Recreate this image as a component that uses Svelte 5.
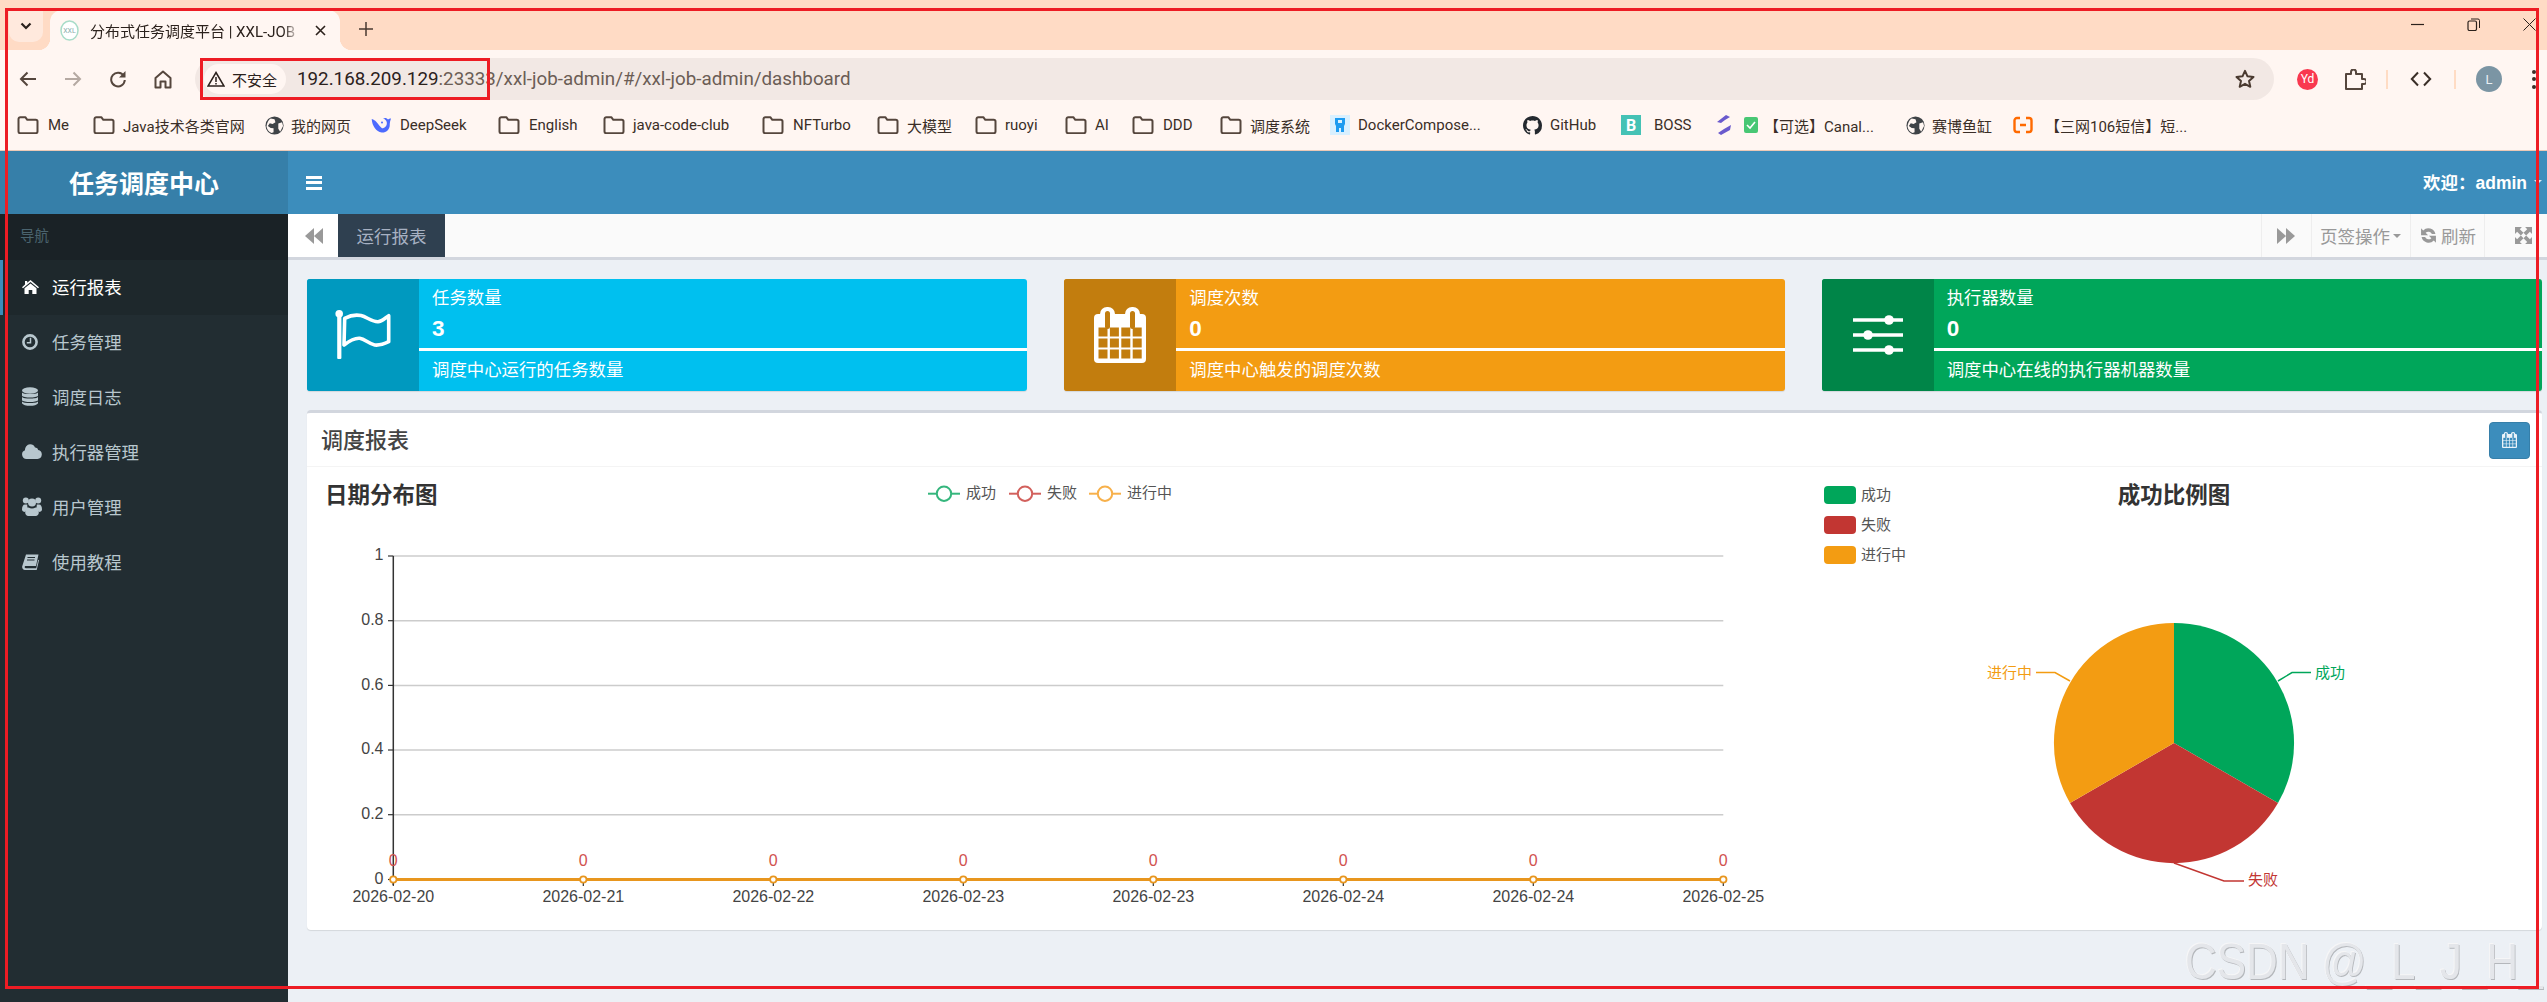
<script>
  const bookmarks = [
    { s: 17, t: 48, label: 'Me', icon: 'folder' },
    { s: 93, t: 123, label: 'Java技术各类官网', icon: 'folder' },
    { s: 265, t: 291, label: '我的网页', icon: 'globe' },
    { s: 371, t: 400, label: 'DeepSeek', icon: 'deepseek' },
    { s: 498, t: 529, label: 'English', icon: 'folder' },
    { s: 603, t: 633, label: 'java-code-club', icon: 'folder' },
    { s: 762, t: 793, label: 'NFTurbo', icon: 'folder' },
    { s: 877, t: 907, label: '大模型', icon: 'folder' },
    { s: 975, t: 1005, label: 'ruoyi', icon: 'folder' },
    { s: 1065, t: 1095, label: 'AI', icon: 'folder' },
    { s: 1132, t: 1163, label: 'DDD', icon: 'folder' },
    { s: 1220, t: 1250, label: '调度系统', icon: 'folder' },
    { s: 1330, t: 1358, label: 'DockerCompose...', icon: 'docker' },
    { s: 1523, t: 1550, label: 'GitHub', icon: 'github' },
    { s: 1621, t: 1654, label: 'BOSS', icon: 'boss' },
    { s: 1715, t: 1764, label: '【可选】Canal...', icon: 'canal' },
    { s: 1906, t: 1932, label: '赛博鱼缸', icon: 'globe' },
    { s: 2013, t: 2045, label: '【三网106短信】短...', icon: 'ali' },
    { s: 2200, t: 2200, label: '', icon: '' }
  ];
  const menu = [
    { icon: 'home', label: '运行报表', active: true },
    { icon: 'clock', label: '任务管理' },
    { icon: 'db', label: '调度日志' },
    { icon: 'cloud', label: '执行器管理' },
    { icon: 'users', label: '用户管理' },
    { icon: 'book', label: '使用教程' }
  ];
  const cards = [
    { cls: 'cyan', kind: 'flag', title: '任务数量', num: '3', desc: '调度中心运行的任务数量' },
    { cls: 'orange', kind: 'cal', title: '调度次数', num: '0', desc: '调度中心触发的调度次数' },
    { cls: 'green', kind: 'sliders', title: '执行器数量', num: '0', desc: '调度中心在线的执行器机器数量' }
  ];
  const yTicks = [
    { y: 556, t: '1' }, { y: 620.7, t: '0.8' }, { y: 685.4, t: '0.6' },
    { y: 750, t: '0.4' }, { y: 814.7, t: '0.2' }, { y: 879.5, t: '0' }
  ];
  const days = ['2026-02-20', '2026-02-21', '2026-02-22', '2026-02-23', '2026-02-23', '2026-02-24', '2026-02-24', '2026-02-25'];
  const xPos = days.map((d, i) => ({ d, x: 393.3 + i * 190 }));
  const lineLegend = [
    { c: '#35b67d', x: 944, tx: 966, t: '成功' },
    { c: '#d2605c', x: 1025, tx: 1047, t: '失败' },
    { c: '#f7b04a', x: 1105, tx: 1127, t: '进行中' }
  ];
  const pieLegend = [
    { c: '#00a65a', y: 486, t: '成功' },
    { c: '#c23632', y: 516, t: '失败' },
    { c: '#f39c12', y: 546, t: '进行中' }
  ];
  const calCols = [0, 1, 2, 3];
  const calRows = [0, 1, 2];
</script>

{#snippet calendar(size, h, fg, bg)}
  <svg width={size} height={h} viewBox="0 0 52 56">
    <rect x="0" y="7" width="52" height="49" rx="4" fill={fg} />
    <rect x="6" y="0" width="15" height="16" rx="7" fill={fg} />
    <rect x="31" y="0" width="15" height="16" rx="7" fill={fg} />
    <rect x="11" y="4" width="5" height="18" rx="2.5" fill={bg} />
    <rect x="36" y="4" width="5" height="18" rx="2.5" fill={bg} />
    {#each calRows as r}
      {#each calCols as c}
        <rect x={4.5 + c * 11.4} y={20.5 + r * 11} width="9" height="9" fill={bg} />
      {/each}
    {/each}
  </svg>
{/snippet}

{#snippet bmIcon(name)}
  {#if name === 'folder'}
    <svg width="22" height="18" viewBox="0 0 22 18"><path d="M1.5 3a1.8 1.8 0 0 1 1.8-1.8h5l2 2.6h8.4a1.8 1.8 0 0 1 1.8 1.8v9.8a1.8 1.8 0 0 1-1.8 1.8H3.3a1.8 1.8 0 0 1-1.8-1.8z" fill="none" stroke="#55463d" stroke-width="2" stroke-linejoin="round" /></svg>
  {:else if name === 'globe'}
    <svg width="19" height="19" viewBox="0 0 20 20"><circle cx="10" cy="10" r="9.5" fill="#3f4347" /><path d="M6 2.5l4 1 1 3-3 2-3-1-2 3 3 2 3 .5v4l-2 1C4 17 2 14 1.6 11 2 7 3.500 4 6 2.500zM14 8l4-1.500 1 4-3 6-2-3z" fill="#fff6f2" /></svg>
  {:else if name === 'deepseek'}
    <svg width="20" height="18" viewBox="0 0 20 18"><path d="M19 2.500c-.8.6-1.400.6-2 1.100C16 2 14 1.500 12 2.500c2 .4 3.500 2 3.800 4 .4 3-1.800 5.800-4.800 5.800-1.800-1.500-3.500-4-6-6.800-1-1-2-1.800-4.300-2.500.4 7 4.500 12.500 10 13.500 4 .5 7.500-2.500 8-6.500.1-1.500 0-3 .4-4.500.3-1 .6-2 .9-3z" fill="#4d6bfe" /><circle cx="11" cy="6.500" r="1" fill="#4d6bfe" /></svg>
  {:else if name === 'docker'}
    <svg width="20" height="20" viewBox="0 0 20 20"><rect width="20" height="20" fill="#d9f0ff" /><path d="M5 3h10v6l-1 2v6h-3v-4H9v4H6v-6L5 9z" fill="#1e9bf0" /><rect x="8" y="5" width="4" height="3" fill="#d9f0ff" /></svg>
  {:else if name === 'github'}
    <svg width="19" height="19" viewBox="0 0 16 16"><path d="M8 0C3.58 0 0 3.58 0 8c0 3.54 2.29 6.53 5.47 7.59.4.07.55-.17.55-.38 0-.19-.01-.82-.01-1.49-2.01.37-2.53-.49-2.69-.94-.09-.23-.48-.94-.82-1.13-.28-.15-.68-.52-.01-.53.63-.01 1.08.58 1.23.82.72 1.21 1.87.87 2.33.66.07-.52.28-.87.51-1.07-1.78-.2-3.64-.89-3.64-3.95 0-.87.31-1.59.82-2.15-.08-.2-.36-1.02.08-2.12 0 0 .67-.21 2.2.82.64-.18 1.32-.27 2-.27.68 0 1.36.09 2 .27 1.53-1.04 2.2-.82 2.2-.82.44 1.1.16 1.92.08 2.12.51.56.82 1.27.82 2.15 0 3.07-1.87 3.75-3.65 3.95.29.25.54.73.54 1.48 0 1.07-.01 1.93-.01 2.2 0 .21.15.46.55.38A8.013 8.013 0 0016 8c0-4.42-3.58-8-8-8z" fill="#24292f" /></svg>
  {:else if name === 'boss'}
    <span class="boss">B</span>
  {:else if name === 'canal'}
    <span class="canal">
      <svg width="18" height="22" viewBox="0 0 18 22"><path d="M11 1l4 2-5 3-4 3-4-1zM16 11l-1 5-9 5-3-2 6-4z" fill="#6a5acd" /></svg>
      <svg width="14" height="16" viewBox="0 0 14 16"><rect width="14" height="16" rx="2" fill="#48c774" /><path d="M3 8l3 3 5-6" stroke="#fff" stroke-width="1.6" fill="none" /></svg>
    </span>
  {:else if name === 'ali'}
    <svg width="20" height="18" viewBox="0 0 20 18"><path d="M7 2H4a2.500 2.500 0 0 0-2.500 2.500v9A2.500 2.500 0 0 0 4 16h3M13 2h3a2.500 2.500 0 0 1 2.500 2.500v9A2.500 2.500 0 0 1 16 16h-3M7 9h6" fill="none" stroke="#ff6a00" stroke-width="2.400" /></svg>
  {/if}
{/snippet}

{#snippet menuIcon(name)}
  {#if name === 'home'}
    <svg width="17" height="14" viewBox="0 0 17 14"><path d="M8.500 0L17 7.200l-1 1.100-7.500-6.200L1 8.300 0 7.200 3 4.600V1h2.200v1.800z" fill="currentColor" /><path d="M8.500 3.400L14.500 8.300V14h-4.200v-4H6.700v4H2.500V8.300z" fill="currentColor" /></svg>
  {:else if name === 'clock'}
    <svg width="16" height="16" viewBox="0 0 16 16"><circle cx="8" cy="8" r="6.600" fill="none" stroke="currentColor" stroke-width="2.600" /><path d="M8.500 3.800V8.800H4.800" fill="none" stroke="currentColor" stroke-width="1.500" /></svg>
  {:else if name === 'db'}
    <svg width="16" height="19" viewBox="0 0 16 19"><ellipse cx="8" cy="3.500" rx="8" ry="3.200" fill="currentColor" /><path d="M0 5.500c1.500 2 14.500 2 16 0v3.300c-1.500 2.400-14.500 2.400-16 0zM0 10c1.500 2 14.500 2 16 0v3.300c-1.500 2.400-14.500 2.400-16 0zM0 14.400c1.500 2 14.500 2 16 0v1.800c-1.500 3.400-14.500 3.400-16 0z" fill="currentColor" /></svg>
  {:else if name === 'cloud'}
    <svg width="20" height="15" viewBox="0 0 20 15"><path d="M4.500 15A4.500 4.500 0 0 1 3 6.300 5.500 5.500 0 0 1 8 .3 5.300 5.300 0 0 1 13 3.500a3 3 0 0 1 3.200 2.600A4.500 4.500 0 0 1 15.500 15z" fill="currentColor" /></svg>
  {:else if name === 'users'}
    <svg width="20" height="19" viewBox="0 0 20 19"><circle cx="3.800" cy="3.400" r="3" fill="currentColor" /><circle cx="16.200" cy="3.400" r="3" fill="currentColor" /><circle cx="10" cy="5.600" r="4" fill="currentColor" /><path d="M0 12.500C0 9.500 1 7.500 3 7.500h2.300c-.3 1.800.3 3.300 1.200 4.200-1.800.7-2.800 1.900-3.300 3.300C1.300 14.800 0 14 0 12.500zM20 12.500c0-3-1-5-3-5h-2.300c.3 1.800-.3 3.300-1.200 4.200 1.800.7 2.800 1.900 3.300 3.300 1.900-.2 3.200-1 3.200-2.500z" fill="currentColor" /><path d="M6.500 10.500c2 1.300 5 1.300 7 0 2.300.5 3.300 2.800 3.300 5.300 0 2-1.500 3.200-3 3.200H6.200c-1.500 0-3-1.200-3-3.200 0-2.500 1-4.800 3.300-5.300z" fill="currentColor" /></svg>
  {:else if name === 'book'}
    <svg width="17" height="16" viewBox="0 0 17 16"><path d="M4 .5h12.500L14 12H3.800c-1.500 0-1.500 2.200 0 2.200H14.200l2-8.500.8.500L14.700 16H3C.8 16-.3 14 .3 12z" fill="currentColor" /><path d="M5.500 3.500h7.500M5 6h7.500" stroke="#222d32" stroke-width="1" /></svg>
  {/if}
{/snippet}

<div class="page">
  <header class="chrome">
    <div class="tabstrip">
      <div class="tabsearch"><svg width="12" height="8" viewBox="0 0 12 8"><path d="M1.500 1.500L6 6l4.500-4.500" fill="none" stroke="#2b211c" stroke-width="2.200" /></svg></div>
      <div class="tab">
        <svg class="favicon" width="19" height="21" viewBox="0 0 19 21"><ellipse cx="9.500" cy="10.500" rx="8.500" ry="9.500" fill="#fff" stroke="#a8dcc8" stroke-width="1.500" /><text x="9.500" y="13" text-anchor="middle" font-size="7" fill="#8aa">XXL</text></svg>
        <span class="tabtitle">分布式任务调度平台 | XXL-JOB</span>
        <svg class="tabclose" width="11" height="11" viewBox="0 0 11 11"><path d="M1 1l9 9M10 1l-9 9" stroke="#2b211c" stroke-width="1.600" /></svg>
      </div>
      <svg class="newtab" width="14" height="14" viewBox="0 0 14 14"><path d="M7 0v14M0 7h14" stroke="#4a3a30" stroke-width="1.500" /></svg>
      <div class="winctl">
        <svg width="13" height="13" viewBox="0 0 13 13"><path d="M0 6.500h13" stroke="#2b211c" stroke-width="1.200" /></svg>
        <svg width="13" height="13" viewBox="0 0 13 13"><rect x="1" y="3" width="8.500" height="9.500" rx="1.500" fill="none" stroke="#2b211c" stroke-width="1.200" /><path d="M4 1h7a1.500 1.500 0 0 1 1.500 1.500V10" fill="none" stroke="#2b211c" /></svg>
        <svg width="13" height="13" viewBox="0 0 13 13"><path d="M.5.500l12 12M12.500.500l-12 12" stroke="#2b211c" stroke-width="1" /></svg>
      </div>
    </div>

    <div class="toolbar">
      <div class="navbtns">
        <span class="nav"><svg width="18" height="18" viewBox="0 0 18 18"><path d="M17 9H2M8.500 2.500L2 9l6.500 6.500" fill="none" stroke="#55463d" stroke-width="2" /></svg></span>
        <span class="nav"><svg width="18" height="18" viewBox="0 0 18 18"><path d="M1 9h15M9.500 2.500L16 9l-6.500 6.500" fill="none" stroke="#b5a9a2" stroke-width="2" /></svg></span>
        <span class="nav"><svg width="18" height="18" viewBox="0 0 18 18"><path d="M14.800 6A6.800 6.800 0 1 0 15.800 10" fill="none" stroke="#55463d" stroke-width="2" /><path d="M16.500 1v6.500H10z" fill="#55463d" /></svg></span>
        <span class="nav"><svg width="18" height="19" viewBox="0 0 18 19"><path d="M1.500 8L9 1.500 16.500 8v9.500h-5v-6h-5v6h-5z" fill="none" stroke="#55463d" stroke-width="2" stroke-linejoin="round" /></svg></span>
      </div>
      <div class="omnibox">
        <div class="chip">
          <svg width="18" height="16" viewBox="0 0 18 16"><path d="M9 1.500L17 15H1z M9 6v5M9 12v1.500" fill="none" stroke="#2b211c" stroke-width="1.500" /></svg>
          <span>不安全</span>
        </div>
        <div class="url"><span class="host">192.168.209.129</span><span class="rest">:23333/xxl-job-admin/#/xxl-job-admin/dashboard</span></div>
        <svg class="star" width="20" height="20" viewBox="0 0 20 20"><path d="M10 1.800l2.500 5.500 6 .6-4.500 4 1.300 5.900L10 14.800l-5.300 3 1.300-5.900-4.500-4 6-.6z" fill="none" stroke="#4a3a30" stroke-width="2" stroke-linejoin="round" /></svg>
      </div>
      <div class="actions">
        <span class="yd">Yd</span>
        <svg class="a-ext" width="22" height="21" viewBox="0 0 22 21"><path d="M2 5h5V3a2.500 2.500 0 0 1 5 0v2h6v5h2a2.500 2.500 0 0 1 0 5h-2v5H2z" fill="none" stroke="#55463d" stroke-width="2" stroke-linejoin="round" /></svg>
        <i class="sep a-sep1"></i>
        <svg class="a-code" width="22" height="16" viewBox="0 0 22 16"><path d="M8 1.500L1.800 8 8 14.500M14 1.500L20.200 8 14 14.500" fill="none" stroke="#3a2e27" stroke-width="2" /></svg>
        <i class="sep a-sep2"></i>
        <span class="avatar">L</span>
        <span class="dots"><i></i><i></i><i></i></span>
      </div>
    </div>

    <div class="bookmarks">
      {#each bookmarks.slice(0, -1) as b, i}
        <div class="bm" style="width:{bookmarks[i + 1].s - b.s}px">
          <span class="bm-icon" style="width:{b.t - b.s}px">{@render bmIcon(b.icon)}</span>
          <span class="bm-label">{b.label}</span>
        </div>
      {/each}
    </div>
  </header>

  <div class="app">
    <aside class="sidebar">
      <div class="logo">任务调度中心</div>
      <div class="navhead">导航</div>
      <ul class="menu">
        {#each menu as m}
          <li class:active={m.active}>
            <span class="micon">{@render menuIcon(m.icon)}</span>
            <span>{m.label}</span>
          </li>
        {/each}
      </ul>
    </aside>

    <main class="main">
      <div class="topnav">
        <div class="burger"><i></i><i></i><i></i></div>
        <div class="welcome">欢迎：admin<span class="caret-w"></span></div>
      </div>

      <div class="tabsbar">
        <div class="tb-left"><svg width="18" height="16" viewBox="0 0 18 16"><path d="M9 0v16L0 8zM18 0v16L9 8z" fill="#999" /></svg></div>
        <div class="tb-active">运行报表</div>
        <div class="tb-right">
          <div class="tb-btn tb-fwd"><svg width="18" height="16" viewBox="0 0 18 16"><path d="M0 0v16l9-8zM9 0v16l9-8z" fill="#999" /></svg></div>
          <div class="tb-btn tb-ops">页签操作<span class="caret-g"></span></div>
          <div class="tb-btn tb-ref">
            <svg width="17" height="17" viewBox="0 0 16 16"><path d="M14.500 6.500A6.800 6.800 0 0 0 3 3.200L1 1.200V7.800h6.600L5.300 5.500A3.600 3.600 0 0 1 11.200 6.500zM1.500 9.500A6.800 6.800 0 0 0 13 12.800l2 2V8.200H8.400l2.300 2.300A3.600 3.600 0 0 1 4.800 9.500z" fill="#999" /></svg>
            刷新
          </div>
          <div class="tb-full"><svg width="17" height="17" viewBox="0 0 16 16"><path d="M0 0h6.500L4.500 2 8 5.500 5.500 8 2 4.500 0 6.500zM16 0v6.500l-2-2L10.500 8 8 5.500 11.500 2l-2-2zM0 16V9.500l2 2L5.500 8 8 10.500 4.500 14l2 2zM16 16H9.500l2-2L8 10.500 10.500 8l3.500 3.500 2-2z" fill="#999" /></svg></div>
        </div>
      </div>

      <div class="content">
        <div class="cards">
          {#each cards as c}
            <div class="card {c.cls}">
              <div class="card-icon">
                {#if c.kind === 'flag'}
                  <svg width="56" height="50" viewBox="0 0 56 50">
                    <rect x="2.200" y="3" width="4.200" height="46" rx="1" fill="#fff" />
                    <circle cx="4.200" cy="3.800" r="3.800" fill="#fff" />
                    <path d="M9.700 8.300C16 5 21 4.500 26 5.500 32 7 37 12 43 11.700 47 11.500 50 8 53.700 5.700V31.700C49 34 44 35.500 39.700 35 34 34 30 29 24.700 28.300 19 27.800 13 32 9 35Z" fill="none" stroke="#fff" stroke-width="3.600" stroke-linejoin="round" />
                  </svg>
                {:else if c.kind === 'cal'}
                  {@render calendar(52, 56, '#fff', '#c27d0e')}
                {:else}
                  <svg width="50" height="40" viewBox="0 0 50 40">
                    <path d="M0 5h50M0 20h50M0 35h50" stroke="#fff" stroke-width="3.400" />
                    <circle cx="36" cy="5" r="4.800" fill="#fff" /><circle cx="15" cy="20" r="4.800" fill="#fff" /><circle cx="36" cy="35" r="4.800" fill="#fff" />
                  </svg>
                {/if}
              </div>
              <div class="card-body">
                <div class="card-title">{c.title}</div>
                <div class="card-num">{c.num}</div>
                <div class="card-bar"></div>
                <div class="card-desc">{c.desc}</div>
              </div>
            </div>
          {/each}
        </div>

        <section class="box">
          <div class="box-head">
            <h3>调度报表</h3>
            <button class="cal-btn" aria-label="日期">{@render calendar(15, 18, '#eaf3f9', '#3c8dbc')}</button>
          </div>
          <div class="box-body">
            <svg class="linechart" width="1493" height="463" viewBox="307 467 1493 463">
              <text x="325" y="497.500" class="ctitle" dominant-baseline="middle">日期分布图</text>
              {#each lineLegend as l}
                <path d="M{l.x - 16} 493.700h32" stroke={l.c} stroke-width="2" />
                <circle cx={l.x} cy="493.700" r="7.200" fill="#fff" stroke={l.c} stroke-width="2" />
                <text x={l.tx} y="494.500" class="lg" dominant-baseline="middle">{l.t}</text>
              {/each}
              {#each yTicks as t}
                <path d="M393.300 {t.y}H1723.300" stroke="#ccc" stroke-width="1.500" />
                <path d="M388 {t.y}H393.300" stroke="#333" stroke-width="1.200" />
                <text x="383.500" y={t.y} text-anchor="end" class="ax" dominant-baseline="middle">{t.t}</text>
              {/each}
              <path d="M393.300 556V885" stroke="#333" stroke-width="1.500" />
              {#each xPos as p}
                <path d="M{p.x} 880V886" stroke="#333" stroke-width="1.200" />
                <text x={p.x} y="897.500" text-anchor="middle" class="ax" dominant-baseline="middle">{p.d}</text>
                <text x={p.x} y="862" text-anchor="middle" class="zero" dominant-baseline="middle">0</text>
              {/each}
              <path d="M393.300 879.500H1723.300" stroke="#e8961e" stroke-width="3" />
              {#each xPos as p}
                <circle cx={p.x} cy="879.500" r="3.200" fill="#fff" stroke="#e8961e" stroke-width="1.800" />
              {/each}
            </svg>
            <svg class="piechart" width="742" height="463" viewBox="1800 467 742 463">
              {#each pieLegend as l}
                <rect x="1824" y={l.y} width="32" height="18" rx="4" fill={l.c} />
                <text x="1861" y={l.y + 10} class="lg" dominant-baseline="middle">{l.t}</text>
              {/each}
              <text x="2174" y="497.500" text-anchor="middle" class="ctitle" dominant-baseline="middle">成功比例图</text>
              <path d="M2174 743V623A120 120 0 0 1 2278 803Z" fill="#00a65a" />
              <path d="M2174 743L2278 803A120 120 0 0 1 2070 803Z" fill="#c23632" />
              <path d="M2174 743L2070 803A120 120 0 0 1 2174 623Z" fill="#f39c12" />
              <path d="M2278 681L2292 672.600H2311" fill="none" stroke="#00a65a" stroke-width="1.500" />
              <path d="M2070 681L2055 672.600H2036" fill="none" stroke="#f39c12" stroke-width="1.500" />
              <path d="M2174 863L2224 881H2244" fill="none" stroke="#c23632" stroke-width="1.500" />
              <text x="2315" y="674" class="lb" fill="#00a65a" dominant-baseline="middle">成功</text>
              <text x="1987" y="674" class="lb" fill="#f39c12" dominant-baseline="middle">进行中</text>
              <text x="2248" y="881" class="lb" fill="#c23632" dominant-baseline="middle">失败</text>
            </svg>
          </div>
        </section>
      </div>
    </main>
  </div>

  <div class="watermark">CSDN @_L_J_H_</div>
  <div class="anno-outer"></div>
  <div class="anno-inner"></div>
</div>

<style>
  :global(body) { margin: 0; background: #ecf0f5; }
  .page {
    position: relative; width: 2547px; height: 1002px; overflow: hidden;
    display: flex; flex-direction: column;
    font-family: "Liberation Sans", "Noto Sans CJK SC", sans-serif;
  }
  .chrome { font-family: "Roboto", "Noto Sans CJK SC", sans-serif; color: #3a2e27; flex: none; }
  .tabstrip { height: 50px; box-sizing: border-box; padding: 10px 0 0 9px; background: #ffdbc5; display: flex; align-items: flex-start; }
  .tabsearch { width: 34px; height: 32px; background: #ffe9dd; border-radius: 0 0 10px 10px; display: flex; align-items: center; justify-content: center; }
  .tab { position: relative; margin-left: 7px; width: 290px; height: 40px; background: #fff6f2; border-radius: 12px 12px 0 0; display: flex; align-items: center; box-sizing: border-box; padding-left: 10px; }
  .tab::before, .tab::after { content: ""; position: absolute; bottom: 0; width: 12px; height: 12px; }
  .tab::before { left: -12px; background: radial-gradient(circle at 0 0, transparent 12px, #fff6f2 12.5px); }
  .tab::after { right: -12px; background: radial-gradient(circle at 100% 0, transparent 12px, #fff6f2 12.5px); }
  .favicon { flex: none; }
  .tabtitle { margin-left: 11px; font-size: 15px; width: 210px; overflow: hidden; white-space: nowrap; color: #2b211c; -webkit-mask-image: linear-gradient(90deg, #000 92%, transparent); mask-image: linear-gradient(90deg, #000 92%, transparent); }
  .tabclose { margin-left: 15px; flex: none; }
  .newtab { margin: 12px 0 0 19px; }
  .winctl { margin-left: auto; padding: 8px 11px 0 0; display: flex; gap: 43px; }
  .toolbar { height: 50px; box-sizing: border-box; padding-top: 8px; background: #fff6f2; display: flex; }
  .navbtns { width: 195px; flex: none; padding-left: 5px; box-sizing: border-box; display: flex; }
  .nav { width: 45px; height: 42px; display: flex; align-items: center; justify-content: center; }
  .omnibox { width: 2079px; flex: none; height: 42px; background: #f2e8e4; border-radius: 21px; display: flex; align-items: center; box-sizing: border-box; padding-left: 9px; }
  .chip { width: 82px; height: 30px; box-sizing: border-box; padding-left: 3px; background: #fff6f2; border-radius: 15px; display: flex; align-items: center; gap: 7px; font-size: 15px; color: #2b211c; flex: none; }
  .url { margin-left: 11px; font-size: 18.800px; white-space: nowrap; color: #6b5d55; }
  .host { color: #2b211c; }
  .star { margin-left: auto; margin-right: 19px; }
  .actions { flex: 1; display: flex; align-items: center; height: 42px; }
  .yd { margin-left: 23px; width: 21px; height: 21px; border-radius: 50%; background: #f9384f; color: #fff; font-size: 12px; display: flex; align-items: center; justify-content: center; }
  .a-ext { margin-left: 26px; }
  .sep { display: block; width: 2px; height: 19px; background: #ffdcc4; }
  .a-sep1 { margin-left: 20px; }
  .a-code { margin-left: 22px; }
  .a-sep2 { margin-left: 22px; }
  .avatar { margin-left: 20px; width: 26px; height: 26px; border-radius: 50%; background: #7b95a4; color: #e8f0f4; font-size: 13px; display: flex; align-items: center; justify-content: center; }
  .dots { margin-left: 30px; display: flex; flex-direction: column; gap: 3.500px; }
  .dots i { display: block; width: 4px; height: 4px; border-radius: 50%; background: #3a2e27; }
  .bookmarks { height: 51px; box-sizing: border-box; padding-left: 17px; background: #fff6f2; border-bottom: 1px solid #ecc9b6; display: flex; align-items: center; }
  .bm { display: flex; align-items: center; flex: none; white-space: nowrap; font-size: 15px; color: #3a2e27; }
  .bm-icon { display: flex; align-items: center; flex: none; }
  .boss { width: 20px; height: 20px; background: #45c2b5; color: #fff; font-weight: 700; font-size: 16px; display: flex; align-items: center; justify-content: center; }
  .canal { display: flex; align-items: center; gap: 11px; }

  .app { flex: 1; display: flex; min-height: 0; }
  .sidebar { width: 288px; flex: none; background: #222d32; }
  .logo { height: 63px; box-sizing: border-box; padding-bottom: 2px; background: #367fa9; color: #fff; font-size: 25px; font-weight: 700; display: flex; align-items: center; justify-content: center; }
  .navhead { height: 46px; box-sizing: border-box; padding: 0 0 5px 20px; background: #1a2226; color: #4b646f; font-size: 14.500px; display: flex; align-items: center; }
  .menu { list-style: none; margin: 0; padding: 0; }
  .menu li { height: 55px; box-sizing: border-box; padding: 0 0 2px 22px; display: flex; align-items: center; color: #b8c7ce; font-size: 17.400px; position: relative; }
  .menu li.active { background: #1e282c; color: #fff; }
  .menu li.active::before { content: ""; position: absolute; left: 0; top: 0; bottom: 0; width: 3px; background: #3c8dbc; }
  .micon { width: 30px; flex: none; display: flex; align-items: center; }

  .main { flex: 1; min-width: 0; display: flex; flex-direction: column; }
  .topnav { height: 63px; box-sizing: border-box; background: #3c8dbc; display: flex; align-items: center; color: #fff; flex: none; }
  .burger { margin-left: 18px; display: flex; flex-direction: column; gap: 2.500px; }
  .burger i { display: block; width: 16px; height: 3px; background: #fff; }
  .welcome { margin-left: auto; margin-right: 5px; padding-bottom: 2px; font-size: 17.500px; font-weight: 700; display: flex; align-items: center; }
  .caret-w { display: inline-block; margin-left: 7px; border: 4px solid transparent; border-top-color: #dceaf3; border-bottom: 0; }
  .tabsbar { height: 46px; box-sizing: border-box; flex: none; display: flex; background: #fafafa; border-bottom: 3px solid #d2d6de; color: #999; font-size: 17.500px; }
  .tb-left { width: 50px; background: #fff; box-sizing: border-box; padding-left: 17px; display: flex; align-items: center; }
  .tb-active { width: 107px; background: #2f4050; color: #a7b1c2; display: flex; align-items: center; justify-content: center; }
  .tb-right { margin-left: auto; display: flex; height: 43px; }
  .tb-btn { display: flex; align-items: center; border-left: 1px solid #eee; box-sizing: border-box; }
  .tb-fwd { width: 50px; padding-left: 15px; }
  .tb-ops { width: 99px; padding-left: 8px; }
  .caret-g { display: inline-block; margin-left: 3px; border: 4.500px solid transparent; border-top-color: #999; border-bottom: 0; }
  .tb-ref { width: 75px; padding-left: 9px; gap: 4px; border-right: 1px solid #eee; }
  .tb-full { width: 62px; box-sizing: border-box; padding-left: 30px; display: flex; align-items: center; }

  .content { flex: 1; padding: 19px 5px 0 19px; background: #ecf0f5; }
  .cards { display: grid; grid-template-columns: repeat(3, 1fr); gap: 37px; }
  .card { height: 112px; display: flex; border-radius: 3px; overflow: hidden; color: #fff; box-shadow: 0 1px 1px rgba(0,0,0,.1); }
  .card-icon { width: 112px; flex: none; display: flex; align-items: center; justify-content: center; }
  .cyan { background: #00c0ef; } .cyan .card-icon { background: #0099bf; }
  .orange { background: #f39c12; } .orange .card-icon { background: #c27d0e; }
  .green { background: #00a65a; } .green .card-icon { background: #008548; }
  .card-body { flex: 1; min-width: 0; display: flex; flex-direction: column; }
  .card-title { height: 36px; box-sizing: border-box; padding: 0 13px 1px; font-size: 17.400px; display: flex; align-items: center; }
  .card-num { height: 33px; box-sizing: border-box; padding: 0 13px 6px; font-size: 22.500px; font-weight: 700; display: flex; align-items: center; }
  .card-bar { height: 3px; background: #fff; }
  .card-desc { flex: 1; padding: 0 13px 5px; font-size: 17.400px; display: flex; align-items: center; }

  .box { margin-top: 19px; height: 520px; box-sizing: border-box; background: #fff; border-top: 3px solid #d2d6de; border-radius: 4px; box-shadow: 0 1px 1px rgba(0,0,0,.1); display: flex; flex-direction: column; }
  .box-head { height: 54px; box-sizing: border-box; flex: none; border-bottom: 1px solid #f4f4f4; display: flex; align-items: center; padding: 0 12px 0 14px; }
  .box-head h3 { margin: 0 0 3px; font-size: 22px; font-weight: 500; color: #444; }
  .cal-btn { margin-left: auto; margin-top: 1px; width: 41px; height: 37px; padding: 0; background: #3c8dbc; border: 1px solid #367fa9; border-radius: 4px; display: flex; align-items: center; justify-content: center; }
  .box-body { flex: 1; display: flex; min-height: 0; }
  .linechart, .piechart { display: block; flex: none; }
  .ctitle { font-size: 22.500px; font-weight: 700; fill: #333; }
  .lg { font-size: 15px; fill: #555; }
  .ax { font-size: 16px; fill: #444; }
  .zero { font-size: 16px; fill: #d0514e; }
  .lb { font-size: 15px; }

  .watermark { position: absolute; left: 2185px; top: 933px; font-size: 50px; white-space: nowrap; color: #e4e6ea; text-shadow: 1px 1px 0 #b4b7bb, -1px -1px 0 #f6f6f7; transform: scaleX(.88); transform-origin: left top; pointer-events: none; }
  .anno-outer { position: absolute; left: 5px; top: 8px; width: 2528px; height: 975px; border: 3px solid #ed1c24; pointer-events: none; }
  .anno-inner { position: absolute; left: 200px; top: 58px; width: 284px; height: 36px; border: 3px solid #ed1c24; pointer-events: none; }
</style>
